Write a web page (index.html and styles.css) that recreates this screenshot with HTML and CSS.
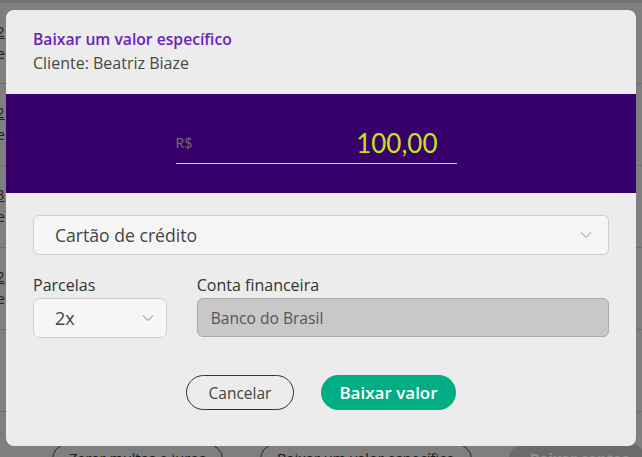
FILE: index.html
```html
<!DOCTYPE html>
<html lang="pt-BR">
<head>
<meta charset="utf-8">
<title>Baixar um valor específico</title>
<link rel="stylesheet" href="styles.css">
</head>
<body>
<div class="page">
  <div class="topbar"></div>
  <div class="rows">
    <div class="row"><span class="num">2</span><span class="sub">e</span></div>
    <div class="row"><span class="num">2</span><span class="sub">e</span></div>
    <div class="row"><span class="num">3</span><span class="sub">e</span></div>
    <div class="row"><span class="num">2</span><span class="sub">e</span></div>
    <div class="row"></div>
  </div>
  <div class="actions">
    <span class="pill">Zerar multas e juros</span>
    <span class="pill">Baixar um valor específico</span>
    <span class="pill disabled">Baixar contas</span>
  </div>
</div>

<div class="overlay">
  <div class="modal">
    <div class="modal-head">
      <div class="title">Baixar um valor específico</div>
      <div class="client">Cliente: Beatriz Biaze</div>
    </div>
    <div class="amount-band">
      <div class="amount-field">
        <span class="currency">R$</span>
        <span class="amount">100,00</span>
      </div>
    </div>
    <div class="form">
      <div class="select wide">
        <span>Cartão de crédito</span>
        <svg class="chev" width="12" height="8" viewBox="0 0 12 8"><path d="M1 1.5 L6 6.5 L11 1.5" fill="none" stroke="#b5b5b5" stroke-width="1.2"/></svg>
      </div>
      <div class="field-row">
        <div class="field small">
          <label>Parcelas</label>
          <div class="select">
            <span>2x</span>
            <svg class="chev" width="12" height="8" viewBox="0 0 12 8"><path d="M1 1.5 L6 6.5 L11 1.5" fill="none" stroke="#b5b5b5" stroke-width="1.2"/></svg>
          </div>
        </div>
        <div class="field grow">
          <label>Conta financeira</label>
          <div class="select disabled-input"><span>Banco do Brasil</span></div>
        </div>
      </div>
      <div class="buttons">
        <button class="btn outline">Cancelar</button>
        <button class="btn primary">Baixar valor</button>
      </div>
    </div>
  </div>
</div>
</body>
</html>
```

FILE: styles.css
```css
* { box-sizing: border-box; }
html, body { margin: 0; padding: 0; }
body {
  width: 642px;
  height: 457px;
  overflow: hidden;
  background: #7f7f7f;
  font-family: "Open Sans", "Lato", sans-serif;
  position: relative;
}
.page { display: flex; flex-direction: column; height: 457px; }
.topbar { height: 3px; background: #737373; }
.rows { display: flex; flex-direction: column; }
.row {
  height: 82px;
  border-bottom: 1px solid #6e6e6e;
  display: flex;
  flex-direction: column;
  padding-top: 18px;
  font-size: 15px;
  color: #1e1e1e;
  line-height: 20px;
}
.row:first-child { height: 81px; }
.row .num { margin-left: -4px; text-decoration: underline; }
.row .sub { margin-left: -3px; margin-top: 3px; font-size: 14px; }
.actions {
  display: flex;
  gap: 37px;
  margin-top: auto;
  padding-left: 52px;
  height: 13px;
}
.pill {
  border: 1px solid #2a2a2a;
  border-radius: 16px;
  padding: 3px 16px;
  font-size: 14.6px;
  color: #1a1a1a;
  height: 30px;
  white-space: nowrap;
}
.pill.disabled {
  border-color: #6b6b6b;
  background: #6b6b6b;
  color: #8e8e8e;
  font-weight: 700;
  padding-left: 20px;
}

.overlay {
  position: absolute;
  inset: 0;
  display: flex;
  align-items: center;
  justify-content: center;
}
.modal {
  width: 630px;
  height: 436px;
  margin-bottom: 1px;
  background: #ececec;
  border-radius: 8px;
  overflow: hidden;
  display: flex;
  flex-direction: column;
}
.modal-head { padding: 19px 27px 0; height: 84px; }
.title { color: #6a1fbe; font-weight: 600; font-size: 15.7px; line-height: 21px; }
.client { color: #474747; font-size: 16px; line-height: 21px; margin-top: 3px; }

.amount-band {
  background: #38006b;
  height: 99px;
  display: flex;
  justify-content: center;
  padding-top: 29px;
  padding-right: 10px;
}
.amount-field {
  width: 281px;
  height: 41px;
  border-bottom: 1px solid #d8c8ee;
  display: flex;
  align-items: flex-end;
  justify-content: space-between;
  padding: 0 19px 4px 0;
}
.currency { color: #6e6e6e; font-size: 14px; line-height: 18px; margin-bottom: 7px; font-family: "Lato", sans-serif; }
.amount { color: #c6e21f; font-size: 26px; line-height: 32px; font-family: "Lato", sans-serif; }

.form { padding: 22px 27px 0; display: flex; flex-direction: column; }
.select {
  height: 40px;
  background: #f6f6f6;
  border: 1px solid #cfcfcf;
  border-radius: 6px;
  display: flex;
  align-items: center;
  justify-content: space-between;
  padding: 0 16px 0 21px;
  font-size: 17.6px;
  color: #444;
}
.select.wide { width: 576px; }
.chev { flex: none; }
.field-row { display: flex; gap: 30px; margin-top: 20px; }
.field { display: flex; flex-direction: column; }
.field label { font-size: 16px; color: #333; line-height: 20px; margin-bottom: 3px; }
.field.small { width: 134px; }
.field.grow { width: 413px; }
.field.small .select { padding-right: 12px; font-size: 18px; }
.disabled-input {
  background: #c8c8c8;
  border-color: #a9a9a9;
  font-size: 15.6px;
  color: #555;
  padding-left: 13px;
  height: 39px;
}
.buttons { display: flex; justify-content: center; gap: 27px; margin-top: 37px; }
.btn {
  font-family: inherit;
  height: 35px;
  border-radius: 18px;
  font-size: 15.5px;
  cursor: pointer;
}
.btn.outline { width: 108px; background: transparent; border: 1px solid #333; color: #444; }
.btn.primary { width: 135px; background: #00ad84; border: none; color: #fff; font-weight: 600; font-size: 17px; }
```
